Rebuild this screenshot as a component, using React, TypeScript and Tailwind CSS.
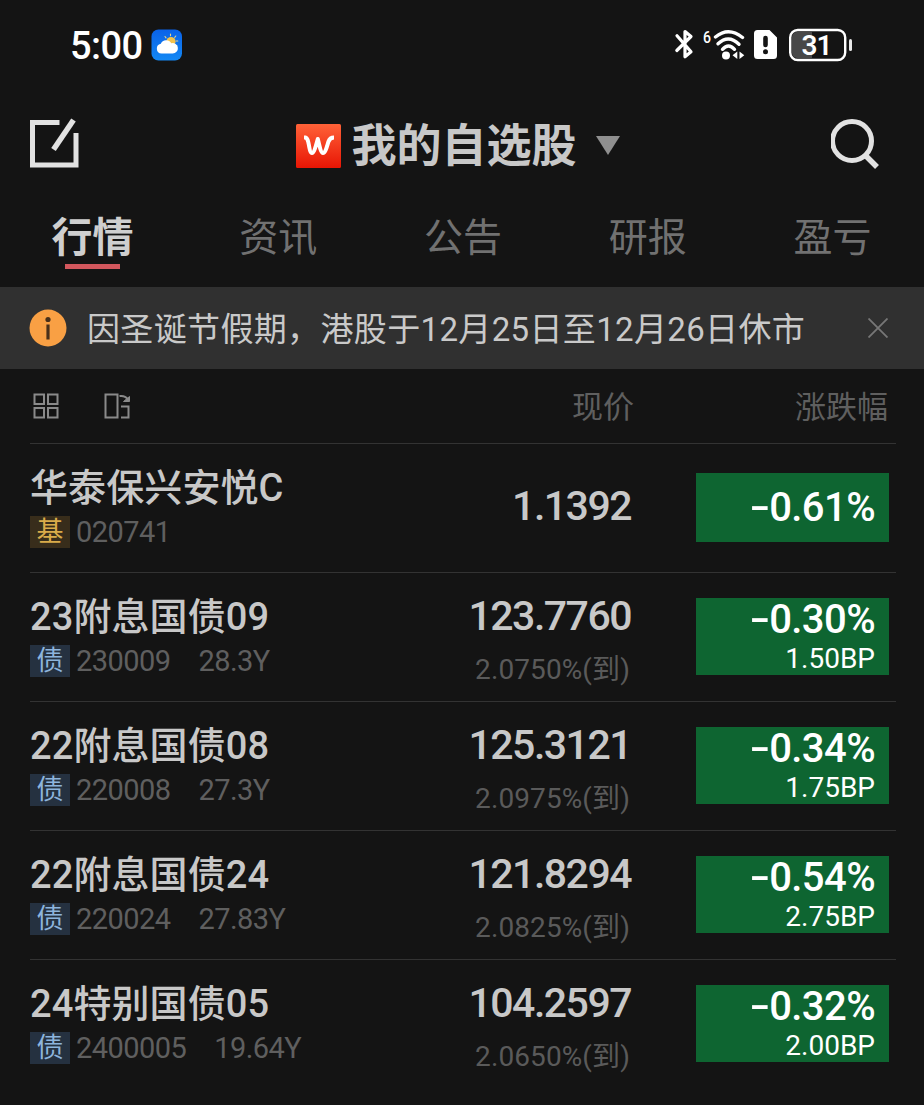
type Bond = {
  name: string;
  kind: '基' | '债';
  code: string;
  term?: string;
  price: string;
  yieldRate?: string;
  change: string;
  bp?: string;
};

const tabs = ['行情', '资讯', '公告', '研报', '盈亏'];

const holdings: Bond[] = [
  { name: '华泰保兴安悦C', kind: '基', code: '020741', price: '1.1392', change: '0.61%' },
  { name: '23附息国债09', kind: '债', code: '230009', term: '28.3Y', price: '123.7760', yieldRate: '2.0750%(到)', change: '0.30%', bp: '1.50BP' },
  { name: '22附息国债08', kind: '债', code: '220008', term: '27.3Y', price: '125.3121', yieldRate: '2.0975%(到)', change: '0.34%', bp: '1.75BP' },
  { name: '22附息国债24', kind: '债', code: '220024', term: '27.83Y', price: '121.8294', yieldRate: '2.0825%(到)', change: '0.54%', bp: '2.75BP' },
  { name: '24特别国债05', kind: '债', code: '2400005', term: '19.64Y', price: '104.2597', yieldRate: '2.0650%(到)', change: '0.32%', bp: '2.00BP' },
];

function WeatherIcon() {
  return (
    <svg width="32" height="32" viewBox="0 0 32 32" className="ml-[9px]">
      <defs>
        <linearGradient id="sky" x1="0" y1="0" x2="0" y2="1">
          <stop offset="0" stopColor="#0a62e8" />
          <stop offset="1" stopColor="#1488f4" />
        </linearGradient>
      </defs>
      <rect x="0.5" y="0.5" width="30.5" height="31" rx="7" fill="url(#sky)" />
      <circle cx="20" cy="12.5" r="4.6" fill="#f5c34c" />
      <path d="M14 7.5l1 1.3M19.5 5v1.8M24.8 7l-1.1 1.3M26.8 12h-1.6M26 17l-1.2-.8" stroke="#e8d48a" strokeWidth="1.1" strokeLinecap="round" />
      <path d="M10.500 24.500a4.900 4.900 0 0 1-.7-9.700 5.800 5.800 0 0 1 10.500-.5 5.200 5.200 0 1 1 1.200 10.200z" fill="#fff" />
    </svg>
  );
}

function StatusIcons() {
  return (
    <svg width="180" height="40" viewBox="0 -4 180 40" fill="none">
      <path d="M4 6.800L18 22.800L12 27.800V2.500L18 7.500L3.800 21.500" stroke="#fff" strokeWidth="3.200" strokeLinejoin="round" strokeLinecap="round" />
      <text x="30" y="13.500" fill="#fff" fontSize="17" fontWeight="500" textLength="8" lengthAdjust="spacingAndGlyphs" className="font-['Roboto']">6</text>
      <g stroke="#fff" strokeWidth="3.400" strokeLinecap="round">
        <path d="M42.500 8Q55.500-2.500 69.500 8.500" />
        <path d="M45 14.800Q55.500 5 66 15.300" />
        <path d="M49.500 20.300Q55.500 13.700 61.500 20.300" />
      </g>
      <circle cx="53" cy="26.500" r="4" fill="#fff" />
      <path d="M64.300 22.500v7.500l-4.800-3.700zM66.500 22.500v7.500l4.800-3.700z" fill="#fff" />
      <path d="M84.500 1h12l7.500 7.500v18a3.500 3.500 0 0 1-3.500 3.500h-16a3.500 3.500 0 0 1-3.500-3.500v-22a3.500 3.500 0 0 1 3.500-3.500z" fill="#fff" />
      <path d="M92.500 9v7" stroke="#141414" strokeWidth="4.600" strokeLinecap="round" />
      <circle cx="92.500" cy="22.800" r="2.500" fill="#141414" />
      <path d="M124 3h15v26h-15a5 5 0 0 1-5-5v-16a5 5 0 0 1 5-5z" fill="#484848" />
      <rect x="117.200" y="1" width="55" height="30" rx="7.500" stroke="#fff" strokeWidth="2.400" />
      <path d="M177.500 11.500v9" stroke="#e8e8e8" strokeWidth="3" strokeLinecap="round" />
      <text x="128.500" y="26" fill="#fff" fontSize="28" fontWeight="600" textLength="31" className="font-['Roboto']">31</text>
    </svg>
  );
}

function StatusBar() {
  return (
    <div className="flex h-[90px] items-center pl-[70px] pr-[71px]">
      <span className="pt-[2px] text-[38px] font-medium leading-[40px] tracking-[-0.6px] text-white">5:00</span>
      <WeatherIcon />
      <div className="ml-auto">
        <StatusIcons />
      </div>
    </div>
  );
}

function TitleBar() {
  return (
    <header className="flex h-[110px] items-center justify-between pl-[29px] pr-[41px]">
      <svg width="52" height="54" viewBox="0 0 52 54" fill="none" stroke="#e2e2e2" strokeWidth="5">
        <path d="M30.500 4.500H3.500v42.500h43.500V15" />
        <path d="M44.500 2L24.500 31.500" strokeWidth="5.500" />
      </svg>
      <div className="flex items-center">
        <svg width="45" height="47" viewBox="0 0 45 47" className="ml-[4px]">
          <defs>
            <linearGradient id="brand" x1="0" y1="0" x2="0" y2="1">
              <stop offset="0" stopColor="#ff6238" />
              <stop offset="1" stopColor="#e81504" />
            </linearGradient>
          </defs>
          <rect y="2" width="45" height="44" rx="1.500" fill="url(#brand)" />
          <path d="M8 15.500H9.500C11.500 16 11.800 18 12.500 21C13.500 26.500 14.200 31 16 31C18 31 19.800 24 21.800 17C23.500 24 25 31 27 31C29.500 31 31 24 32.500 19.500C33.500 16.500 35 15.500 38 15.500" fill="none" stroke="#fff" strokeWidth="4" strokeLinejoin="round" />
        </svg>
        <h1 className="ml-[10px] pt-[4px] text-[45px] font-bold leading-[50px] text-[#c8c8c8]">我的自选股</h1>
        <svg width="24" height="19" viewBox="0 0 24 19" className="ml-[19px]">
          <path d="M0 0h24L12 19z" fill="#8f8f8f" />
        </svg>
      </div>
      <svg width="52" height="54" viewBox="0 0 52 54" fill="none" stroke="#e2e2e2" strokeWidth="5">
        <circle cx="21" cy="23" r="19.500" />
        <path d="M34 37l12 12" strokeWidth="5.500" />
      </svg>
    </header>
  );
}

function Tabs() {
  return (
    <nav className="grid h-[87px] grid-cols-5">
      {tabs.map((tab, i) =>
        i === 0 ? (
          <div key={tab} className="flex flex-col items-center pt-[12px]">
            <span className="text-[41px] font-bold leading-[53px] text-[#cfcfcf]">{tab}</span>
            <span className="-mt-px h-[5px] w-[55px] bg-[#d3575d]" />
          </div>
        ) : (
          <div key={tab} className="pl-[2px] pt-[12px] text-center text-[39px] leading-[53px] text-[#717171]">
            {tab}
          </div>
        ),
      )}
    </nav>
  );
}

function Notice() {
  return (
    <div className="flex h-[82px] items-center bg-[#303030] pl-[29px] pr-[36px]">
      <svg width="38" height="38" viewBox="0 0 38 38">
        <circle cx="19" cy="19" r="18.500" fill="#f9a044" />
        <circle cx="19" cy="10.500" r="2.600" fill="#49301a" />
        <path d="M19 15.500v15" stroke="#49301a" strokeWidth="3.200" />
      </svg>
      <span className="ml-[20px] whitespace-nowrap pt-[4px] text-[33px] leading-[40px] tracking-[0.35px] text-[#c9c9c9]">
        因圣诞节假期，港股于12月25日至12月26日休市
      </span>
      <svg width="20" height="20" viewBox="0 0 20 20" className="ml-auto" stroke="#777" strokeWidth="1.800">
        <path d="M.5.5l19 19M19.500.5l-19 19" />
      </svg>
    </div>
  );
}

function ColumnHeader() {
  return (
    <div className="ml-[30px] mr-[28px] flex h-[75px] items-center border-b border-[#333] text-[31px] leading-[40px] text-[#5f5f5f]">
      <svg width="100" height="26" viewBox="0 0 100 26" fill="none" stroke="#8a8a8a" strokeWidth="2" className="ml-[3px]">
        <path d="M1.500 1.500h9.500v9.500h-9.500zM15 1.500h9.500v9.500H15zM1.500 15h9.500v9.500h-9.500zM15 15h9.500v9.500H15z" />
        <path d="M72.500 1.500h12v23h-12z" />
        <path d="M86.500 3c4-.5 6.500.5 8 3M88 13.500h7.500v11H88" />
        <path d="M90.500 8.500h6V3.500z" fill="#8a8a8a" strokeWidth="1" />
      </svg>
      <span className="ml-auto pt-[4px]">现价</span>
      <span className="mr-[8px] w-[254px] pt-[4px] text-right">涨跌幅</span>
    </div>
  );
}

function Row({ item }: { item: Bond }) {
  const fund = item.kind === '基';
  return (
    <li className="ml-[30px] mr-[28px] flex h-[129px] border-b border-[#333] last:border-b-0">
      <div className="flex-1 pt-[21px]">
        <div className="whitespace-nowrap text-[38px] font-medium leading-[46px] tracking-[0.1px] text-[#c8c8c8]">{item.name}</div>
        <div className="mt-[5px] flex h-[32px] items-center whitespace-nowrap text-[29px] leading-[32px] tracking-[-0.55px] text-[#5f5f5f]">
          <span
            className={
              fund
                ? 'h-[32px] w-[40px] bg-[#382d1b] text-center text-[27px] leading-[33px] tracking-normal text-[#d9ab4a]'
                : 'h-[32px] w-[40px] bg-[#253140] text-center text-[27px] leading-[33px] tracking-normal text-[#8db4dc]'
            }
          >
            {item.kind}
          </span>
          <span className="ml-[6px]">{item.code}</span>
          {item.term && <span className="ml-[28px]">{item.term}</span>}
        </div>
      </div>
      <div className={fund ? 'pt-[39px] text-right' : 'pt-[20px] text-right'}>
        <div className="text-[41px] font-medium leading-[47px] tracking-[-1.5px] text-[#c8c8c8]">{item.price}</div>
        {item.yieldRate && <div className="mr-[1px] mt-[12px] text-[28px] leading-[36px] tracking-[0.1px] text-[#5a5a5a]">{item.yieldRate}</div>}
      </div>
      <div
        className={
          fund
            ? 'ml-[65px] mr-[7px] mt-[29px] flex h-[69px] w-[193px] items-center justify-end bg-[#0e6531] pr-[14px] text-white'
            : 'ml-[65px] mr-[7px] mt-[25px] flex h-[77px] w-[193px] flex-col items-end bg-[#0e6531] pr-[14px] text-white'
        }
      >
        <div className="text-[40px] font-medium leading-[44px] tracking-[-0.6px]">
          <span className="mr-[3px] inline-block scale-x-150">-</span>
          {item.change}
        </div>
        {item.bp && <div className="mt-px text-[28px] leading-[32px]">{item.bp}</div>}
      </div>
    </li>
  );
}

export default function App() {
  return (
    <main className="h-[1105px] w-[924px] overflow-hidden bg-[#141414] font-['Roboto','Noto_Sans_CJK_SC',sans-serif]" lang="zh-CN">
      <StatusBar />
      <TitleBar />
      <Tabs />
      <Notice />
      <ColumnHeader />
      <ul>
        {holdings.map((item) => (
          <Row key={item.code} item={item} />
        ))}
      </ul>
    </main>
  );
}
